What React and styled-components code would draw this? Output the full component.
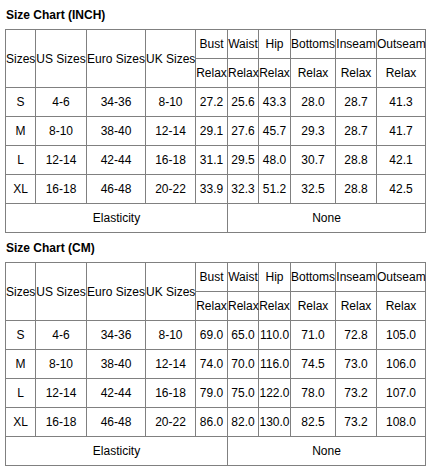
import React from 'react';
import styled, { createGlobalStyle } from 'styled-components';

const GlobalStyle = createGlobalStyle`
  body {
    margin: 0;
    background: #ffffff;
    font-family: "Liberation Sans", Arial, sans-serif;
    color: #000000;
  }
`;

const Page = styled.div`
  padding: 0 0 0 5px;
`;

const Title = styled.div`
  height: 29px;
  display: flex;
  align-items: center;
  padding-left: 1px;
  font-size: 12px;
  font-weight: bold;
`;

const Chart = styled.table`
  border-collapse: collapse;
  table-layout: fixed;
  width: 421px;
  font-size: 12px;
  margin-bottom: 0;
`;

const Cell = styled.td`
  border: 1px solid #808080;
  padding: 0;
  height: 28px;
  text-align: center;
  vertical-align: middle;
  white-space: nowrap;
  overflow: visible;
  line-height: 14px;
`;

const widths = [30, 51, 59, 50, 32, 31, 32, 45, 41, 49];
const measures = ['Bust', 'Waist', 'Hip', 'Bottoms', 'Inseam', 'Outseam'];

const inchRows = [
  ['S', '4-6', '34-36', '8-10', '27.2', '25.6', '43.3', '28.0', '28.7', '41.3'],
  ['M', '8-10', '38-40', '12-14', '29.1', '27.6', '45.7', '29.3', '28.7', '41.7'],
  ['L', '12-14', '42-44', '16-18', '31.1', '29.5', '48.0', '30.7', '28.8', '42.1'],
  ['XL', '16-18', '46-48', '20-22', '33.9', '32.3', '51.2', '32.5', '28.8', '42.5'],
];

const cmRows = [
  ['S', '4-6', '34-36', '8-10', '69.0', '65.0', '110.0', '71.0', '72.8', '105.0'],
  ['M', '8-10', '38-40', '12-14', '74.0', '70.0', '116.0', '74.5', '73.0', '106.0'],
  ['L', '12-14', '42-44', '16-18', '79.0', '75.0', '122.0', '78.0', '73.2', '107.0'],
  ['XL', '16-18', '46-48', '20-22', '86.0', '82.0', '130.0', '82.5', '73.2', '108.0'],
];

function SizeTable({ title, rows }) {
  return (
    <section>
      <Title>{title}</Title>
      <Chart>
        <colgroup>
          {widths.map((w, i) => <col key={i} style={{ width: w }} />)}
        </colgroup>
        <tbody>
          <tr>
            <Cell rowSpan={2}>Sizes</Cell>
            <Cell rowSpan={2}>US Sizes</Cell>
            <Cell rowSpan={2}>Euro Sizes</Cell>
            <Cell rowSpan={2}>UK Sizes</Cell>
            {measures.map(m => <Cell key={m}>{m}</Cell>)}
          </tr>
          <tr>
            {measures.map(m => <Cell key={m}>Relax</Cell>)}
          </tr>
          {rows.map(r => (
            <tr key={r[0]}>
              {r.map((v, i) => <Cell key={i}>{v}</Cell>)}
            </tr>
          ))}
          <tr>
            <Cell colSpan={5}>Elasticity</Cell>
            <Cell colSpan={5}>None</Cell>
          </tr>
        </tbody>
      </Chart>
    </section>
  );
}

export default function App() {
  return (
    <Page>
      <GlobalStyle />
      <SizeTable title="Size Chart (INCH)" rows={inchRows} />
      <SizeTable title="Size Chart (CM)" rows={cmRows} />
    </Page>
  );
}
